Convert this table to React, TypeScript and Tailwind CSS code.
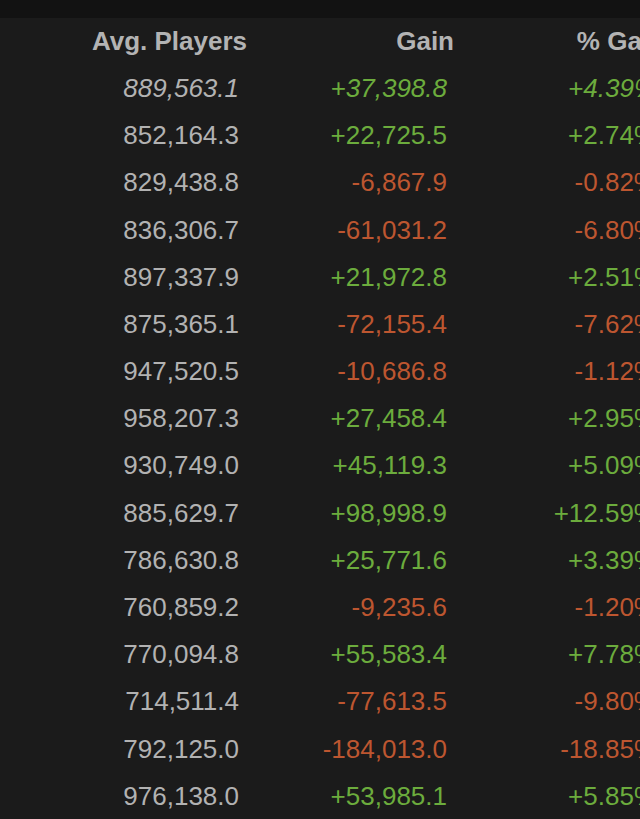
const rows: [string, string, string][] = [
  ["889,563.1", "+37,398.8", "+4.39%"],
  ["852,164.3", "+22,725.5", "+2.74%"],
  ["829,438.8", "-6,867.9", "-0.82%"],
  ["836,306.7", "-61,031.2", "-6.80%"],
  ["897,337.9", "+21,972.8", "+2.51%"],
  ["875,365.1", "-72,155.4", "-7.62%"],
  ["947,520.5", "-10,686.8", "-1.12%"],
  ["958,207.3", "+27,458.4", "+2.95%"],
  ["930,749.0", "+45,119.3", "+5.09%"],
  ["885,629.7", "+98,998.9", "+12.59%"],
  ["786,630.8", "+25,771.6", "+3.39%"],
  ["760,859.2", "-9,235.6", "-1.20%"],
  ["770,094.8", "+55,583.4", "+7.78%"],
  ["714,511.4", "-77,613.5", "-9.80%"],
  ["792,125.0", "-184,013.0", "-18.85%"],
  ["976,138.0", "+53,985.1", "+5.85%"],
];

export default function App() {
  return (
    <div
      className="w-[640px] h-[819px] overflow-hidden bg-[#1b1b1b] text-[26px] leading-none"
      style={{ fontFamily: '"Liberation Sans", Arial, sans-serif' }}
    >
      {/* dark strip above the table */}
      <div className="h-[18px] bg-[#121212]" />

      <div className="w-[700px]">
        <div className="grid grid-cols-[247px_207px_211px] h-[46.4px] items-center font-bold text-[#b3b3b3]">
          <div className="text-right">Avg. Players</div>
          <div className="text-right">Gain</div>
          <div className="text-right whitespace-nowrap">% Gain</div>
        </div>

        {rows.map(([avg, gain, pct], i) => {
          const up = gain.startsWith("+");
          const color = up ? "text-[#6cac3d]" : "text-[#bd5630]";
          return (
            <div
              key={i}
              className={`grid grid-cols-[247px_207px_211px] h-[47.2px] items-center ${i === 0 ? "italic" : ""}`}
            >
              <div className="text-right pr-[8px] text-[#b2b2b2]">{avg}</div>
              <div className={`text-right pr-[7px] ${color}`}>{gain}</div>
              <div className={`text-right pr-[8px] whitespace-nowrap ${color}`}>{pct}</div>
            </div>
          );
        })}
      </div>
    </div>
  );
}
